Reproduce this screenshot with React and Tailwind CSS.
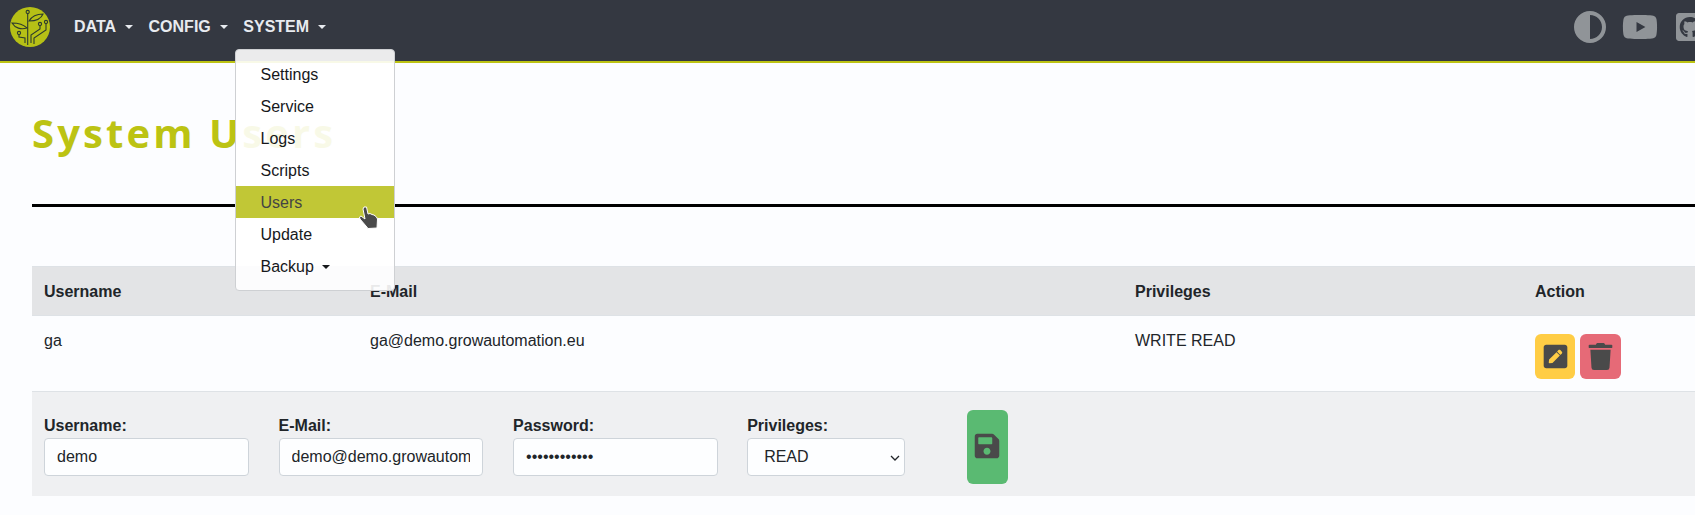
import { FaCircleHalfStroke } from "react-icons/fa6";
import { FaYoutube, FaGithubSquare, FaPenSquare, FaTrash, FaSave } from "react-icons/fa";

const menuItems = ["Settings", "Service", "Logs", "Scripts", "Users", "Update", "Backup"];

function Caret({ className }) {
  return (
    <span
      className={`inline-block w-0 h-0 border-x-[4.8px] border-t-[4.8px] border-x-transparent ${className}`}
    />
  );
}

function Logo() {
  return (
    <svg width="42" height="42" viewBox="0 0 42 42" className="shrink-0">
      <circle cx="21" cy="21" r="20" fill="#b6c016" />
      <g fill="none" stroke="#2c3a2e" strokeWidth="1.1">
        <path d="M18.7 7.5 V39" />
        <circle cx="18.7" cy="6" r="1.6" />
        <path d="M20 15 C23 10 29 8 34 8 C32 13 26 15 20 15 Z" />
        <path d="M18 22 C14 18 8 17 3 17 C6 22 12 24 18 22 Z" />
        <circle cx="31" cy="18" r="1.6" />
        <path d="M31 20 V23 L22 29 V37" />
        <circle cx="37" cy="16" r="1.6" />
        <path d="M37 18 V24 L25 32 V38" />
        <circle cx="10" cy="27" r="1.6" />
        <path d="M10 29 V31 L16 32 V37" />
      </g>
    </svg>
  );
}

function NavLink({ label }) {
  return (
    <div className="flex items-center gap-[9px] font-bold text-[#e8ebf0] uppercase">
      <span>{label}</span>
      <Caret className="border-t-[#e8ebf0]" />
    </div>
  );
}

function Field({ label, children, className }) {
  return (
    <div className={className}>
      <div className="font-bold text-[#212529] leading-[24px]">{label}</div>
      {children}
    </div>
  );
}

const inputClass =
  "w-[204.55px] h-[38px] px-3 bg-[#fdfeff] text-[#212529] border border-[#ced4da] rounded-[4px] outline-none";

export default function App() {
  return (
    <div className="relative w-[1695px] h-[515px] overflow-hidden bg-[#fcfdff] text-[16px] text-[#212529] font-['Liberation_Sans',Arial,sans-serif]">
      <div className="w-[1706px]">
        {/* Navbar */}
        <nav className="flex items-center h-[63px] bg-[#343841] border-b-2 border-[#bcc313] pl-[9px] pr-0 pb-[8px]">
          <Logo />
          <div className="flex items-center gap-[15.5px] ml-[23px]">
            <NavLink label="Data" />
            <NavLink label="Config" />
            <NavLink label="System" />
          </div>
          <div className="ml-auto flex items-center gap-[16px] text-[#909498]">
            <FaCircleHalfStroke size={32} />
            <FaYoutube size={36} />
            <FaGithubSquare size={32} />
          </div>
        </nav>

        <div className="pl-[32px]">
          <h1 className="mt-[40px] font-['Open_Sans',sans-serif] font-bold text-[40px] leading-[60px] tracking-[3.1px] text-[#bcc313]">
            System Users
          </h1>
          <hr className="mt-[41px] border-t-[3px] border-black" />

          {/* Table */}
          <div className="mt-[59px]">
            <div className="grid grid-cols-[326px_765px_400px_1fr] h-[50px] items-center bg-[#e3e4e6] border-y border-[#dee2e6] pl-[12px] pt-[2px] font-bold">
              <div>Username</div>
              <div>E-Mail</div>
              <div>Privileges</div>
              <div>Action</div>
            </div>
            <div className="grid grid-cols-[326px_765px_400px_1fr] h-[76px] pl-[12px] pt-[13px] border-b border-[#dee2e6]">
              <div>ga</div>
              <div>ga@demo.growautomation.eu</div>
              <div>WRITE READ</div>
              <div className="flex gap-[5px] pt-[5px]">
                <button className="flex items-center justify-center w-[40px] h-[45px] bg-[#ffcd45] rounded-[6px] text-[#4a4a4a]">
                  <FaPenSquare size={27} />
                </button>
                <button className="flex items-center justify-center w-[41px] h-[45px] bg-[#e66a77] rounded-[6px] text-[#4a4a4a]">
                  <FaTrash size={27} />
                </button>
              </div>
            </div>

            {/* Add user form */}
            <div className="flex h-[104px] bg-[#eff0f2] pl-[12px] pt-[22px]">
              <Field label="Username:" className="mr-[30px]">
                <input className={inputClass} defaultValue="demo" readOnly />
              </Field>
              <Field label="E-Mail:" className="mr-[30px]">
                <input className={inputClass} defaultValue="demo@demo.growautomation.eu" readOnly />
              </Field>
              <Field label="Password:" className="mr-[29.5px]">
                <input className={inputClass} type="password" defaultValue="demodemodemo" readOnly />
              </Field>
              <Field label="Privileges:" className="mr-[62px]">
                <div className="relative w-[157.5px]">
                  <select className="appearance-none w-full h-[38px] pl-[16px] bg-[#fdfeff] border border-[#ced4da] rounded-[4px] outline-none">
                    <option>READ</option>
                  </select>
                  <svg width="10" height="6" viewBox="0 0 10 6" className="absolute left-[143px] top-[17px]">
                    <path d="M1 1 L5 5 L9 1" fill="none" stroke="#212529" strokeWidth="1.3" />
                  </svg>
                </div>
              </Field>
              <button className="flex justify-center pt-[22px] w-[41px] h-[74px] -mt-[4px] bg-[#5aba72] rounded-[6px] text-[#4a4a4a]">
                <FaSave size={28} />
              </button>
            </div>
          </div>
        </div>
      </div>

      {/* Open SYSTEM dropdown */}
      <div className="absolute left-[235px] top-[49px] w-[160px] h-[242px] py-[8px] bg-white/90 border border-[#ced0d3] rounded-[4px]">
        {menuItems.map((item) => (
          <div
            key={item}
            className={`flex items-center gap-[8px] h-[32px] pl-[24.5px] pt-[2px] ${
              item === "Users" ? "bg-[#c1c736] text-[#444]" : "text-[#16181b]"
            }`}
          >
            {item}
            {item === "Backup" && <Caret className="border-t-[#16181b]" />}
          </div>
        ))}
      </div>

      {/* Mouse cursor */}
      <svg width="22" height="24" viewBox="0 0 22 24" className="absolute left-[358px] top-[206px]">
        <path
          d="M6 1 L8.5 1 L10 8 L12 7.5 L14 8.5 L16 9 L18.5 11 L19.5 13 L19 22 L10 22.5 L8 20 L2 13 L1.5 11 L3 10 L7 13 L5 3 Z"
          fill="#4a4a4a"
          stroke="#ffffff"
          strokeWidth="1"
          strokeLinejoin="round"
        />
      </svg>
    </div>
  );
}
